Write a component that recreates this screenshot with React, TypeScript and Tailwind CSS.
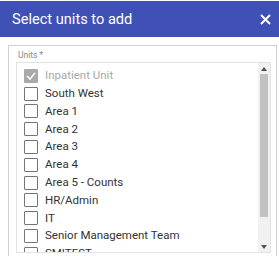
import React from "react";

const items = [
  "South West",
  "Area 1",
  "Area 2",
  "Area 3",
  "Area 4",
  "Area 5 - Counts",
  "HR/Admin",
  "IT",
  "Senior Management Team",
  "SMITEST",
];

export default function App() {
  return (
    <div className="w-[279px] h-[256px] bg-white overflow-hidden pt-px" style={{ fontFamily: "Roboto, 'Liberation Sans', sans-serif" }}>
      <div className="h-[36px] bg-[#3f51b5] flex items-center justify-between pl-[12px] pr-[7px]">
        <span className="text-white text-[14.6px] leading-none">Select units to add</span>
        <svg width="11" height="11" viewBox="0 0 11 11" className="mr-px">
          <path d="M1 1 L10 10 M10 1 L1 10" stroke="white" strokeWidth="2" />
        </svg>
      </div>
      <div className="ml-[8px] mr-[2px] mt-[8px] border border-[#d0d0d0] border-b-0 h-[220px] pt-[4px] pl-[7px] pr-[5px]">
        <div className="text-[8.5px] leading-[11px] text-[#8a8a8a] h-[12px] pl-[2px]">Units *</div>
        <div className="border border-[#e3e3e3] h-[191px] flex">
          <div className="flex-1 pl-[7px] pt-[4px] overflow-hidden">
            <div className="flex items-center h-[17.8px]">
              <div className="w-[14px] h-[14px] bg-[#a9a9a9] rounded-[1px] flex items-center justify-center">
                <svg width="10" height="8" viewBox="0 0 10 8">
                  <path d="M1 4 L4 7 L9 1" stroke="white" strokeWidth="1.6" fill="none" />
                </svg>
              </div>
              <span className="ml-[7px] text-[11.5px] text-[#a9a9a9]">Inpatient Unit</span>
            </div>
            {items.map((t) => (
              <div key={t} className="flex items-center h-[17.8px]">
                <div className="w-[14px] h-[14px] border border-[#757575] rounded-[1px] bg-white shrink-0" />
                <span className="ml-[7px] text-[11.5px] text-[#333] whitespace-nowrap">{t}</span>
              </div>
            ))}
          </div>
          <div className="w-[12px] bg-[#f1f1f1] flex flex-col items-stretch">
            <div className="h-[11px] flex items-center justify-center">
              <svg width="6" height="4" viewBox="0 0 6 4"><path d="M3 0 L6 4 L0 4 Z" fill="#505050" /></svg>
            </div>
            <div className="mx-[2px] h-[143px] bg-[#c1c1c1]" />
            <div className="flex-1" />
            <div className="h-[11px] flex items-center justify-center">
              <svg width="6" height="4" viewBox="0 0 6 4"><path d="M0 0 L6 0 L3 4 Z" fill="#505050" /></svg>
            </div>
          </div>
        </div>
      </div>
    </div>
  );
}
